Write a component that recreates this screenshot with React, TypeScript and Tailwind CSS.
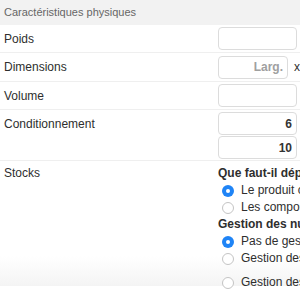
import React from 'react';

function Radio({ checked }: { checked?: boolean }) {
  return checked ? (
    <span className="w-[12px] h-[12px] rounded-full bg-[#1f84f6] flex items-center justify-center shrink-0">
      <span className="w-[4px] h-[4px] rounded-full bg-white" />
    </span>
  ) : (
    <span className="w-[12px] h-[12px] rounded-full border border-[#c4c4c4] bg-white shrink-0" />
  );
}

function Field({ value, placeholder, width = 'w-[79px]' }: { value?: string; placeholder?: string; width?: string }) {
  return (
    <div className={`${width} h-[23px] rounded-[4px] border border-[#dcdcdc] bg-white flex items-center justify-end pr-[4px] text-[12px] font-bold text-[#333]`}>
      {value ?? <span className="text-[#a0a0a0] font-bold">{placeholder}</span>}
    </div>
  );
}

function Option({ checked, label, className = '' }: { checked?: boolean; label: string; className?: string }) {
  return (
    <div className={`flex items-center gap-[7px] pl-[4px] h-[17px] whitespace-nowrap ${className}`}>
      <Radio checked={checked} />
      <span>{label}</span>
    </div>
  );
}

export default function App() {
  return (
    <div className="w-[300px] h-[300px] overflow-hidden bg-white text-[12px] text-[#2e2e2e]" style={{ fontFamily: '"Liberation Sans", Arial, sans-serif' }}>
      {/* Section header */}
      <div className="h-[25px] bg-[#f2f2f2] flex items-center pl-[4px] text-[11px] text-[#666]">
        Caractéristiques physiques
      </div>

      {/* Poids */}
      <div className="flex items-center h-[28px] border-b border-[#efefef]">
        <div className="flex-1 pl-[4px]">Poids</div>
        <div className="w-[82px]">
          <Field />
        </div>
      </div>

      {/* Dimensions */}
      <div className="flex items-center h-[29px] border-b border-[#efefef]">
        <div className="flex-1 pl-[4px]">Dimensions</div>
        <div className="w-[82px] flex items-center gap-[6px] whitespace-nowrap">
          <Field placeholder="Larg." width="w-[72px]" />
          <span>x</span>
        </div>
      </div>

      {/* Volume */}
      <div className="flex items-center h-[28px] border-b border-[#efefef]">
        <div className="flex-1 pl-[4px]">Volume</div>
        <div className="w-[82px]">
          <Field />
        </div>
      </div>

      {/* Conditionnement */}
      <div className="flex h-[51px] border-b border-[#efefef] pt-[2px]">
        <div className="flex-1 pl-[4px] pt-[3px]">Conditionnement</div>
        <div className="w-[82px] flex flex-col gap-[1px]">
          <Field value="6" />
          <Field value="10" />
        </div>
      </div>

      {/* Stocks */}
      <div className="flex h-[125px] pt-[4px] bg-[linear-gradient(to_bottom,#ffffff_0%,#ffffff_76%,#f4f4f4_100%)]">
        <div className="flex-1 pl-[4px] leading-[17px]">Stocks</div>
        <div className="w-[82px] leading-[17px]">
          <div className="font-bold whitespace-nowrap overflow-hidden">Que faut-il déplacer ?</div>
          <Option checked label="Le produit composé" />
          <Option label="Les composants" />
          <div className="font-bold whitespace-nowrap overflow-hidden">Gestion des numéros</div>
          <Option checked label="Pas de gestion" />
          <Option label="Gestion des lots" />
          <Option label="Gestion des séries" className="mt-[7px]" />
        </div>
      </div>
    </div>
  );
}
